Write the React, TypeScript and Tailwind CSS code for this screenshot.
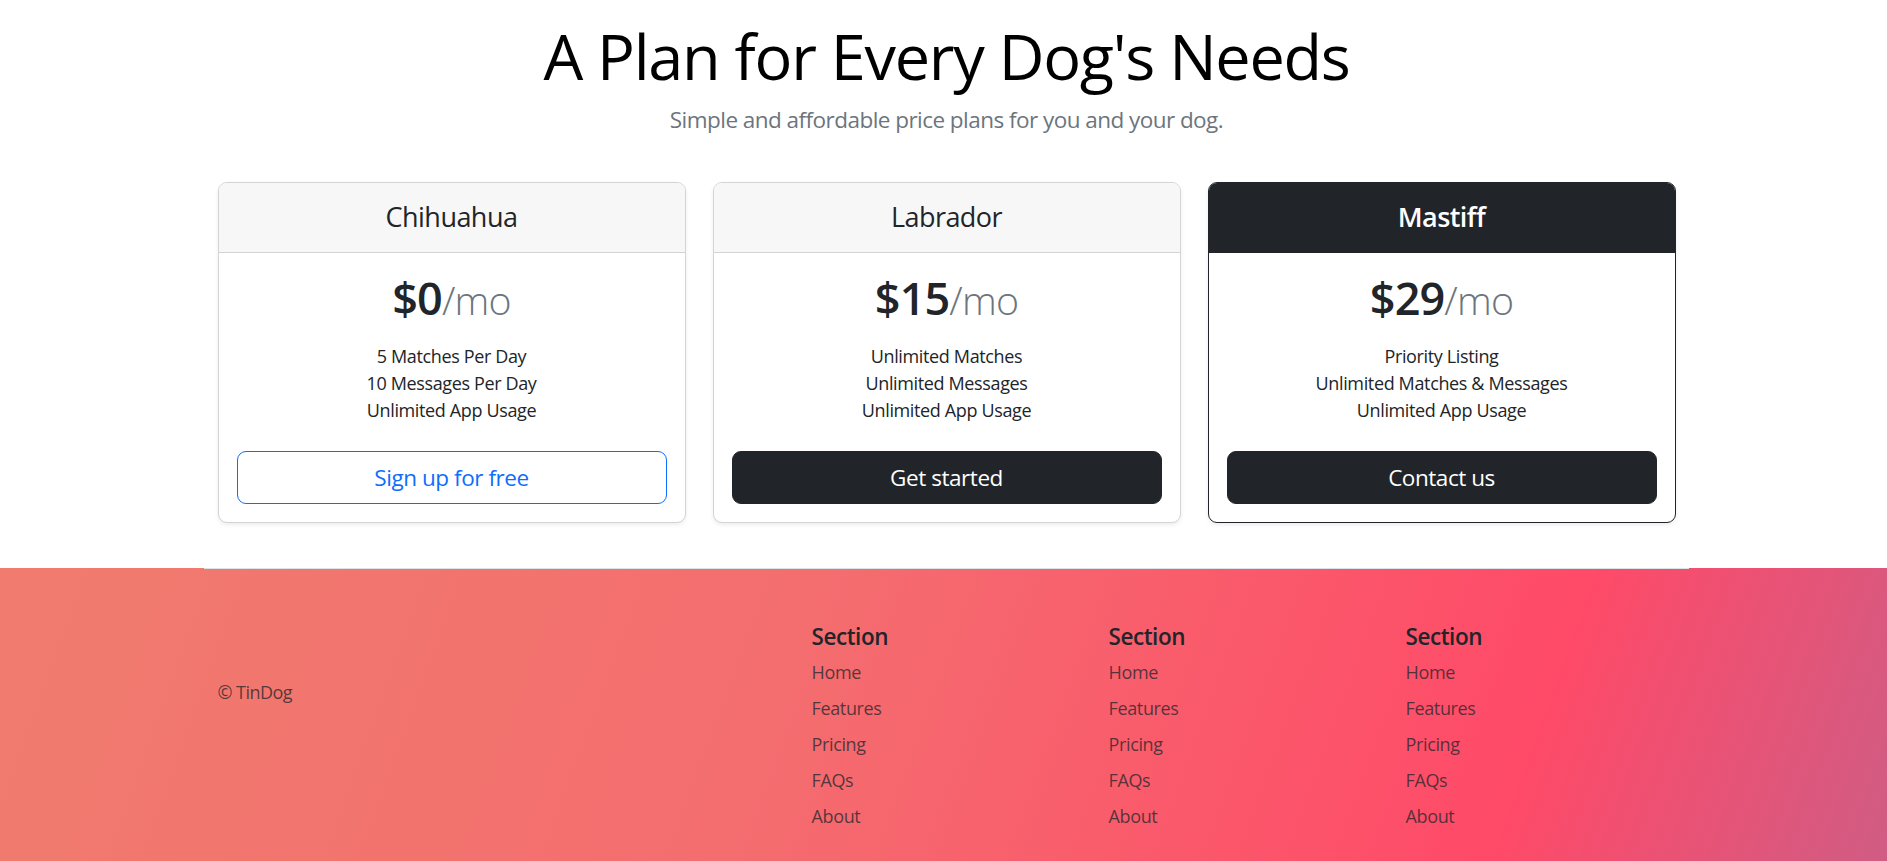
import React from "react";

type Plan = {
  name: string;
  price: string;
  features: string[];
  cta: string;
  variant: "outline" | "dark" | "featured";
};

const plans: Plan[] = [
  {
    name: "Chihuahua",
    price: "$0",
    features: ["5 Matches Per Day", "10 Messages Per Day", "Unlimited App Usage"],
    cta: "Sign up for free",
    variant: "outline",
  },
  {
    name: "Labrador",
    price: "$15",
    features: ["Unlimited Matches", "Unlimited Messages", "Unlimited App Usage"],
    cta: "Get started",
    variant: "dark",
  },
  {
    name: "Mastiff",
    price: "$29",
    features: ["Priority Listing", "Unlimited Matches & Messages", "Unlimited App Usage"],
    cta: "Contact us",
    variant: "featured",
  },
];

const links = ["Home", "Features", "Pricing", "FAQs", "About"];

function PlanCard({ plan }: { plan: Plan }) {
  const featured = plan.variant === "featured";
  return (
    <div
      className={
        "overflow-hidden rounded-[9px] border bg-white shadow-[0_2px_4px_rgba(0,0,0,0.075)] " +
        (featured ? "border-[#212529]" : "border-[#d3d4d5]")
      }
    >
      <div
        className={
          "border-b py-[18px] text-center " +
          (featured
            ? "border-[#212529] bg-[#212529] text-white"
            : "border-[#d3d4d5] bg-[#f7f7f7] text-[#212529]")
        }
      >
        <h4
          className={
            "text-[27px] leading-[1.2] tracking-[-0.02em] " +
            (featured ? "font-semibold" : "font-normal")
          }
        >
          {plan.name}
        </h4>
      </div>
      <div className="p-[18px] text-center">
        <h1 className="text-[45px] leading-[1.2] font-semibold tracking-[-0.02em] text-[#212529]">
          {plan.price}
          <small className="text-[0.875em] font-light tracking-[-0.02em] text-[#6c757d]">/mo</small>
        </h1>
        <ul className="mt-[18px] text-[18px] leading-[27px] tracking-[-0.02em] text-[#212529]">
          {plan.features.map((f) => (
            <li key={f}>{f}</li>
          ))}
        </ul>
        <button
          className={
            "mt-[27px] w-full rounded-[9px] border px-[18px] py-[9px] text-[22.5px] leading-[1.5] tracking-[-0.02em] " +
            (plan.variant === "outline"
              ? "border-[#0d6efd] bg-white text-[#0d6efd]"
              : "border-[#212529] bg-[#212529] text-white")
          }
        >
          {plan.cta}
        </button>
      </div>
    </div>
  );
}

export default function App() {
  return (
    <div className="min-h-screen bg-white font-['Open_Sans',sans-serif] text-[#212529]">
      <div className="ml-[204px] w-[1485px] px-[13.5px]">
        <header className="pt-[18px] text-center">
          <h1 className="text-[63px] leading-[1.2] font-normal tracking-[-0.02em] text-black">
            A Plan for Every Dog's Needs
          </h1>
          <p className="mt-[9px] text-[22.5px] leading-[1.5] tracking-[-0.024em] text-[#6c757d]">
            Simple and affordable price plans for you and your dog.
          </p>
        </header>
        <div className="mt-[46px] grid grid-cols-3 gap-[27px]">
          {plans.map((p) => (
            <PlanCard key={p.name} plan={p} />
          ))}
        </div>
      </div>

      <footer className="mt-[45px] h-[293px] bg-[linear-gradient(110deg,#f07c6e_0%,#f46d6f_42%,#ff4a68_80%,#d05c84_100%)]">
        <div className="ml-[204px] flex w-[1485px] border-t border-[#dee2e6] pt-[54px]">
          <div className="w-[40%] px-[13.5px]">
            <small className="mt-[56px] block text-[18px] leading-[1.5] tracking-[-0.03em] text-[rgba(33,37,41,0.75)]">
              © TinDog
            </small>
          </div>
          {[0, 1, 2].map((i) => (
            <div key={i} className="w-[20%] px-[13.5px]">
              <h5 className="mb-[9px] text-[22.5px] leading-[1.2] font-semibold tracking-[-0.02em] text-[#212529]">
                Section
              </h5>
              <ul className="text-[18px] leading-[27px] tracking-[-0.02em]">
                {links.map((l) => (
                  <li key={l} className="mb-[9px]">
                    <a href="#" className="text-[rgba(33,37,41,0.75)]">
                      {l}
                    </a>
                  </li>
                ))}
              </ul>
            </div>
          ))}
        </div>
      </footer>
    </div>
  );
}
